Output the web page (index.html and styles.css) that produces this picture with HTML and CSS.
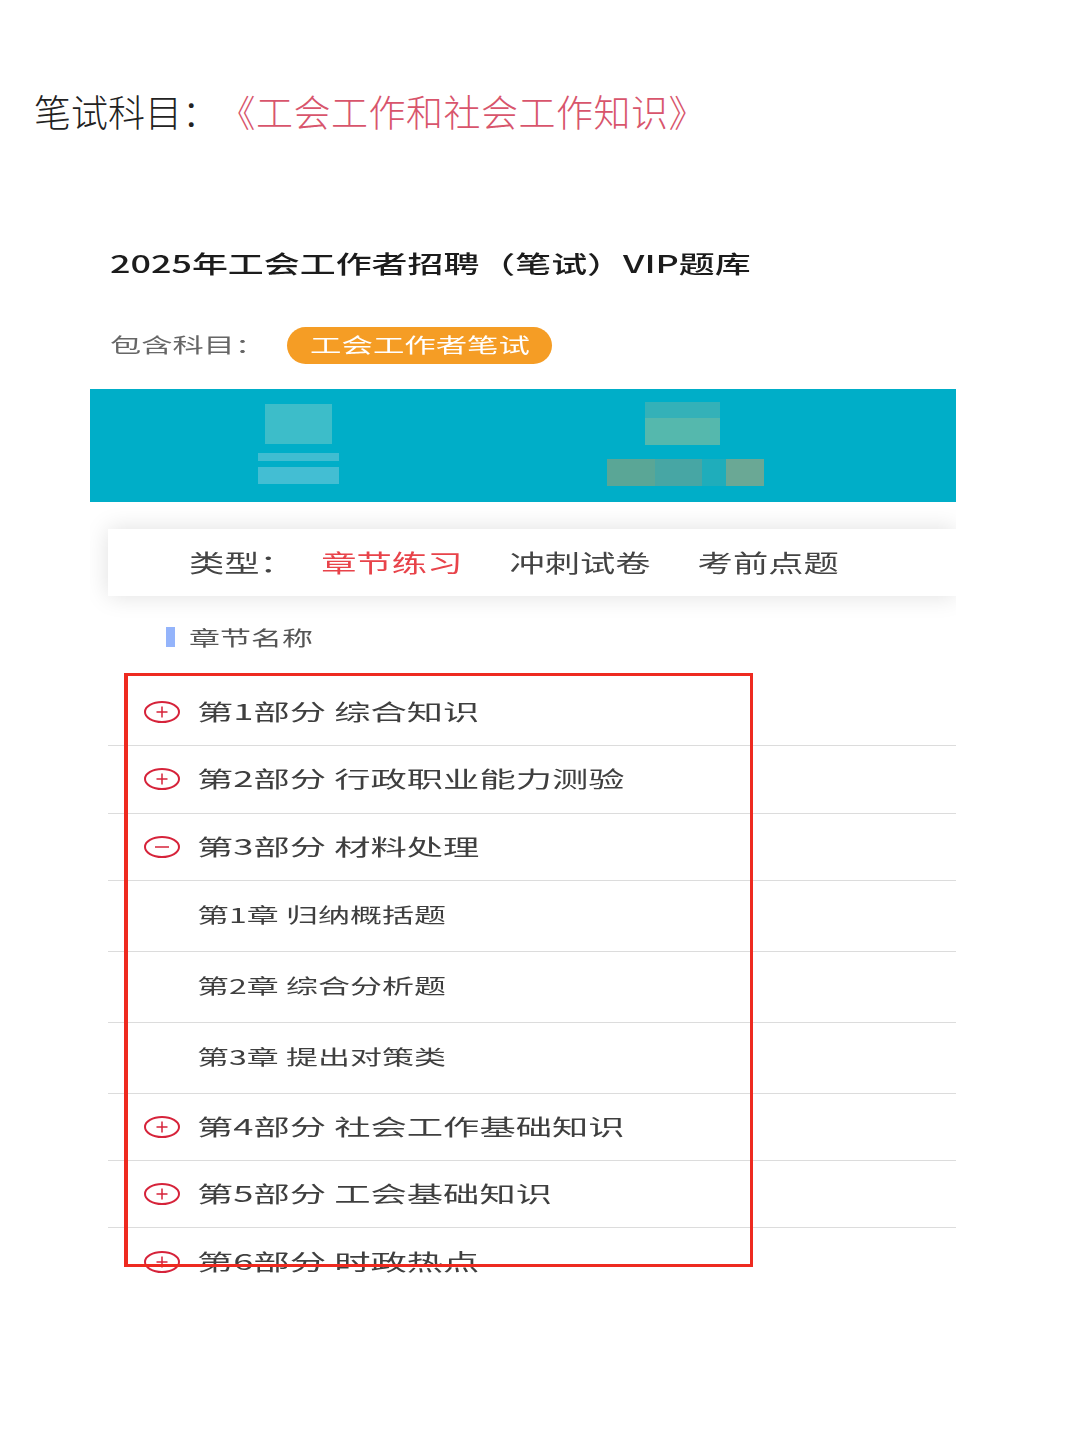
FILE: index.html
```html
<!DOCTYPE html>
<html lang="zh-CN">
<head>
<meta charset="utf-8">
<title>笔试科目</title>
<link rel="stylesheet" href="styles.css">
</head>
<body>
<main class="page">
  <h1 class="heading">笔试科目：<span class="heading-accent">《工会工作和社会工作知识》</span></h1>
  <section class="shot">
    <h2 class="title"><span class="wide">2025年工会工作者招聘（笔试）VIP题库</span></h2>
    <div class="meta">
      <span class="meta-label wide">包含科目：</span>
      <span class="pill"><span class="wide-center">工会工作者笔试</span></span>
    </div>
    <div class="banner">
      <div class="banner-col">
        <div class="blur b-square"></div>
        <div class="blur b-bar-thin"></div>
        <div class="blur b-bar"></div>
      </div>
      <div class="banner-col banner-col-right">
        <div class="b-stack"><div class="b-stack-top"></div><div class="b-stack-bottom"></div></div>
        <div class="b-strip"><i class="s1"></i><i class="s2"></i><i class="s3"></i><i class="s4"></i></div>
      </div>
    </div>
    <div class="tabs">
      <div class="tabs-inner">
        <span class="tab-label">类型：</span>
        <span class="tab tab-active">章节练习</span>
        <span class="tab">冲刺试卷</span>
        <span class="tab">考前点题</span>
      </div>
    </div>
    <div class="section-name"><span class="section-bar"></span><span class="wide">章节名称</span></div>
    <div class="list">
      <div class="row"><svg class="ico" viewBox="0 0 36 22"><ellipse cx="18" cy="11" rx="17" ry="10"/><path class="ico-mark" d="M12.500 11H23.500M18 5.500V16.500"/></svg><span class="wide">第1部分 综合知识</span></div>
      <div class="row"><svg class="ico" viewBox="0 0 36 22"><ellipse cx="18" cy="11" rx="17" ry="10"/><path class="ico-mark" d="M12.500 11H23.500M18 5.500V16.500"/></svg><span class="wide">第2部分 行政职业能力测验</span></div>
      <div class="row"><svg class="ico" viewBox="0 0 36 22"><ellipse cx="18" cy="11" rx="17" ry="10"/><path class="ico-mark" d="M11 11H25"/></svg><span class="wide">第3部分 材料处理</span></div>
      <div class="row row-sub"><span class="wide">第1章 归纳概括题</span></div>
      <div class="row row-sub"><span class="wide">第2章 综合分析题</span></div>
      <div class="row row-sub"><span class="wide">第3章 提出对策类</span></div>
      <div class="row"><svg class="ico" viewBox="0 0 36 22"><ellipse cx="18" cy="11" rx="17" ry="10"/><path class="ico-mark" d="M12.500 11H23.500M18 5.500V16.500"/></svg><span class="wide">第4部分 社会工作基础知识</span></div>
      <div class="row"><svg class="ico" viewBox="0 0 36 22"><ellipse cx="18" cy="11" rx="17" ry="10"/><path class="ico-mark" d="M12.500 11H23.500M18 5.500V16.500"/></svg><span class="wide">第5部分 工会基础知识</span></div>
      <div class="row row-last"><svg class="ico" viewBox="0 0 36 22"><ellipse cx="18" cy="11" rx="17" ry="10"/><path class="ico-mark" d="M12.500 11H23.500M18 5.500V16.500"/></svg><span class="wide">第6部分 时政热点</span></div>
      <div class="highlight"></div>
    </div>
  </section>
</main>
</body>
</html>
```
FILE: styles.css
```css
* { box-sizing: border-box; }
html, body { margin: 0; padding: 0; background: #fff; }
body { font-family: "Noto Sans CJK SC", "Liberation Sans", sans-serif; }
.page { width: 1080px; height: 1440px; overflow: hidden; padding-top: 88px; }
.heading { margin: 0 0 0 34px; font-size: 37px; line-height: 46px; font-weight: 300; color: #222; white-space: nowrap; }
.heading-accent { margin-left: 18px; letter-spacing: 0.500px; color: #d8556c; }
.shot { width: 866px; margin: 112px 0 0 90px; overflow: hidden; padding-bottom: 40px; filter: blur(0.4px); }
.wide { display: inline-block; transform: scaleX(1.497); transform-origin: left center; white-space: pre; }
.wide-center { display: inline-block; margin-bottom: 2px; transform: scaleX(1.57); white-space: pre; }
.title { margin: 0 0 0 20px; height: 34px; font-size: 24px; line-height: 34px; font-weight: 500; color: #1c1c1c; }
.meta { display: flex; align-items: center; height: 37px; margin: 47px 0 0 20px; }
.meta-label { width: 177px; margin-bottom: 2px; font-size: 20px; color: #666; transform: scaleX(1.56); }
.pill { display: flex; align-items: center; justify-content: center; width: 265px; height: 37px; border-radius: 19px; background: #f59d25; color: #fff; font-size: 20px; }
.banner { display: grid; grid-template-columns: 385px 385px; height: 113px; margin-top: 25px; padding-left: 16px; background: #00aec8; }
.banner-col { display: flex; flex-direction: column; align-items: center; padding-top: 15px; }
.banner-col-right { margin-left: -2px; padding-top: 13px; }
.b-square { width: 67px; height: 40px; background: #3dbdc9; }
.b-bar-thin { width: 81px; height: 8px; margin-top: 9px; background: #40bdd1; }
.b-bar { width: 81px; height: 17px; margin-top: 6px; background: #43bed3; }
.b-stack { width: 75px; height: 43px; }
.b-stack-top { height: 16px; background: #34b1b8; }
.b-stack-bottom { height: 27px; background: #55b8ad; }
.b-strip { display: flex; width: 157px; height: 27px; margin: 14px 0 0 6px; }
.b-strip i { display: block; height: 100%; }
.s1 { width: 48px; background: #5aa696; }
.s2 { width: 47px; background: #47a6a4; }
.s3 { width: 24px; background: #1fadbb; }
.s4 { width: 38px; background: #6aa895; }
.tabs { height: 67px; margin: 27px 0 0 18px; background: #fff; box-shadow: 0 0 24px rgba(0, 0, 0, 0.13); display: flex; align-items: center; padding-left: 81px; }
.tabs-inner { display: flex; margin-bottom: 2px; transform: scaleX(1.47); transform-origin: left center; font-size: 24px; line-height: 34px; color: #444; white-space: nowrap; }
.tab-label { width: 90px; }
.tab { margin-right: 32px; }
.tab-active { color: #e8434a; }
.section-name { display: flex; align-items: center; height: 20px; margin: 31px 0 0 76px; font-size: 20px; color: #555; }
.section-bar { width: 9px; height: 20px; margin-right: 14px; background: #94b4fb; }
.section-name .wide { transform: scaleX(1.55); }
.list { position: relative; margin: 32px 0 0 18px; }
.row { display: flex; align-items: center; height: 67.300px; border-bottom: 1px solid #dcdcdc; padding-left: 36px; font-size: 22px; color: #3f3f3f; }
.row .wide { margin: 0 0 4px 17px; transform: scaleX(1.65); }
.row-sub { height: 71px; padding-left: 89px; font-size: 20px; }
.row-sub .wide { margin: 0 0 2px 0; transform: scaleX(1.6); }
.row-last { border-bottom: 0; }
.ico { width: 36px; height: 22px; flex: none; fill: none; stroke: #d6233a; stroke-width: 2; }
.ico-mark { stroke-width: 1.500; }
.highlight { position: absolute; left: 16px; top: -6px; width: 629px; height: 594px; border: 3px solid #ee2a20; border-left-width: 4px; }
```
